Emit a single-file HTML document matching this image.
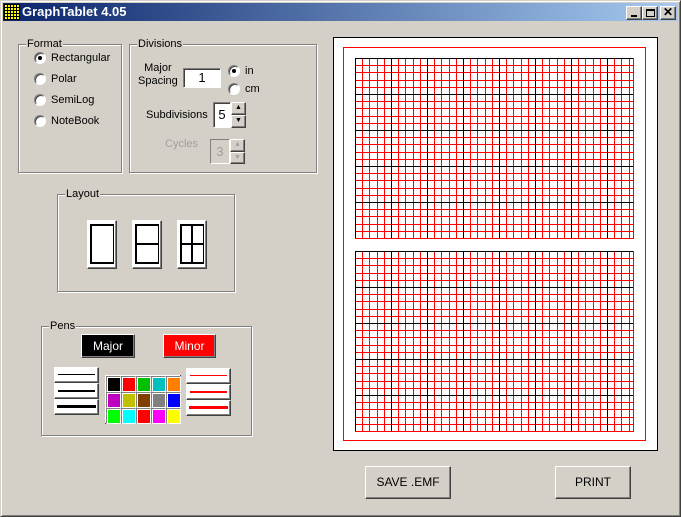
<!DOCTYPE html>
<html><head><style>
*{box-sizing:border-box}
body{margin:0;width:681px;height:517px;background:#d4d0c8;font-family:"Liberation Sans",sans-serif;font-size:11px;color:#000;position:relative;overflow:hidden}
.a{position:absolute}
.win{left:0;top:0;width:681px;height:517px;border:1px solid;border-color:#d4d0c8 #404040 #404040 #d4d0c8;box-shadow:inset 1px 1px #fff,inset -1px -1px #808080}
.title{left:3px;top:3px;width:675px;height:18px;background:linear-gradient(90deg,#0a246a,#a6caf0);color:#fff;font-weight:bold;font-size:13px;line-height:18px;padding-left:19px}
.tb{top:6px;width:16px;height:14px;background:#d4d0c8;border:1px solid;border-color:#fff #404040 #404040 #fff;box-shadow:inset -1px -1px #808080}
.grp{border:1px solid #808080;box-shadow:1px 1px #fff,inset 1px 1px #fff}
.leg{background:#d4d0c8;padding:0 1px;top:-7px;left:7px;line-height:12px}
.rad{width:12px;height:12px;border-radius:50%;background:#fff;border:1px solid;border-color:#808080 #fff #fff #808080;box-shadow:inset 1px 1px #404040}
.dot{width:4px;height:4px;border-radius:50%;background:#000;left:3px;top:3px}
.btn{border:1px solid;border-color:#fff #404040 #404040 #fff;box-shadow:inset -1px -1px #808080;background:#d4d0c8;text-align:center}
.sunk{border:1px solid;border-color:#808080 #fff #fff #808080;box-shadow:inset 1px 1px #404040;background:#fff}
.wb{background:#fff;border:1px solid;border-color:#fff #404040 #404040 #fff;box-shadow:inset -1px -1px #808080}
.sw{width:15px;height:16px;border:1px solid;border-color:#808080 #fff #fff #808080}
.sw i{display:block;position:absolute;left:1px;top:1px;width:12px;height:13px;border:0}
</style></head><body>
<div class="a win"></div>
<div class="a title">GraphTablet 4.05</div>
<svg class="a" style="left:4px;top:4px" width="16" height="16"><rect width="16" height="16" fill="#ff0"/><path d="M0.5 0V16M3.5 0V16M6.5 0V16M9.5 0V16M12.5 0V16M15.5 0V16M0 .5H16M0 3.5H16M0 6.5H16M0 9.5H16M0 12.5H16M0 15.5H16" stroke="#000"/></svg>
<div class="a tb" style="left:626px"><div class="a" style="left:4px;top:8px;width:6px;height:2px;background:#000"></div></div>
<div class="a tb" style="left:642px"><div class="a" style="left:3px;top:2px;width:9px;height:8px;border:1px solid #000;border-top-width:2px"></div></div>
<div class="a tb" style="left:660px;font-weight:bold;font-size:12px;line-height:11px;text-align:center">✕</div>

<div class="a grp" style="left:18px;top:44px;width:104px;height:129px"><span class="a leg">Format</span></div>
<div class="a rad" style="left:34px;top:52px"><div class="a dot"></div></div><div class="a" style="left:51px;top:52px">Rectangular</div>
<div class="a rad" style="left:34px;top:73px"></div><div class="a" style="left:51px;top:73px">Polar</div>
<div class="a rad" style="left:34px;top:94px"></div><div class="a" style="left:51px;top:94px">SemiLog</div>
<div class="a rad" style="left:34px;top:115px"></div><div class="a" style="left:51px;top:115px">NoteBook</div>

<div class="a grp" style="left:129px;top:44px;width:188px;height:129px"><span class="a leg">Divisions</span></div>
<div class="a" style="left:138px;top:62px;text-align:center;line-height:13px">Major<br>Spacing</div>
<div class="a sunk" style="left:183px;top:68px;width:38px;height:20px;text-align:center;font-size:13px;line-height:18px">1</div>
<div class="a rad" style="left:228px;top:65px"><div class="a dot"></div></div><div class="a" style="left:245px;top:65px">in</div>
<div class="a rad" style="left:228px;top:83px"></div><div class="a" style="left:245px;top:83px">cm</div>
<div class="a" style="left:146px;top:109px">Subdivisions</div>
<div class="a sunk" style="left:213px;top:102px;width:18px;height:26px;font-size:13px;line-height:24px;text-align:center">5</div>
<div class="a btn" style="left:231px;top:102px;width:15px;height:13px;font-size:7px;line-height:10px">▲</div>
<div class="a btn" style="left:231px;top:115px;width:15px;height:13px;font-size:7px;line-height:10px">▼</div>
<div class="a" style="left:165px;top:138px;color:#a0a0a0">Cycles</div>
<div class="a" style="left:210px;top:139px;width:20px;height:25px;border:1px solid;border-color:#808080 #fff #fff #808080;background:#d4d0c8;color:#a0a0a0;font-size:13px;line-height:23px;text-align:center">3</div>
<div class="a btn" style="left:230px;top:139px;width:15px;height:13px;font-size:7px;line-height:10px;color:#a0a0a0">▲</div>
<div class="a btn" style="left:230px;top:152px;width:15px;height:12px;font-size:7px;line-height:10px;color:#a0a0a0">▼</div>

<div class="a grp" style="left:57px;top:194px;width:178px;height:98px"><span class="a leg">Layout</span></div>
<div class="a wb" style="left:87px;top:220px;width:30px;height:49px"><div class="a" style="left:2px;top:3px;width:24px;height:40px;border:1px solid #000;border-width:2px 1px 2px 2px"></div></div>
<div class="a wb" style="left:132px;top:220px;width:30px;height:49px"><div class="a" style="left:2px;top:3px;width:24px;height:40px;border:1px solid #000;border-width:2px 1px 2px 2px"></div><div class="a" style="left:2px;top:22px;width:24px;height:2px;background:#000"></div></div>
<div class="a wb" style="left:177px;top:220px;width:30px;height:49px"><div class="a" style="left:2px;top:3px;width:24px;height:40px;border:1px solid #000;border-width:2px 1px 2px 2px"></div><div class="a" style="left:2px;top:22px;width:24px;height:2px;background:#000"></div><div class="a" style="left:13px;top:3px;width:2px;height:40px;background:#000"></div></div>

<div class="a grp" style="left:41px;top:326px;width:211px;height:110px"><span class="a leg">Pens</span></div>
<div class="a btn" style="left:81px;top:334px;width:54px;height:24px;background:#000;color:#fff;font-size:12px;line-height:22px">Major</div>
<div class="a btn" style="left:163px;top:334px;width:53px;height:24px;background:#f00;color:#fff;font-size:12px;line-height:22px">Minor</div>
<div class="a wb" style="left:54px;top:367px;width:45px;height:16px"><div class="a" style="left:3px;top:6px;width:37px;height:1px;background:#000"></div></div>
<div class="a wb" style="left:54px;top:383px;width:45px;height:16px"><div class="a" style="left:3px;top:6px;width:37px;height:2px;background:#000"></div></div>
<div class="a wb" style="left:54px;top:399px;width:45px;height:16px"><div class="a" style="left:2px;top:5px;width:39px;height:3px;background:#000"></div></div>
<div class="a wb" style="left:186px;top:368px;width:45px;height:16px"><div class="a" style="left:3px;top:6px;width:37px;height:1px;background:#f00"></div></div>
<div class="a wb" style="left:186px;top:384px;width:45px;height:16px"><div class="a" style="left:3px;top:6px;width:37px;height:2px;background:#f00"></div></div>
<div class="a wb" style="left:186px;top:400px;width:45px;height:16px"><div class="a" style="left:2px;top:5px;width:39px;height:3px;background:#f00"></div></div>
<div class="a" style="left:105px;top:375px;width:76px;height:49px;background:#fff;border-right:1px solid #404040;border-bottom:1px solid #404040"></div>
<div class="a sw" style="left:106px;top:376px"><i style="background:#000"></i></div>
<div class="a sw" style="left:121px;top:376px"><i style="background:#f00"></i></div>
<div class="a sw" style="left:136px;top:376px"><i style="background:#00c000"></i></div>
<div class="a sw" style="left:151px;top:376px"><i style="background:#00c0c0"></i></div>
<div class="a sw" style="left:166px;top:376px"><i style="background:#ff8000"></i></div>
<div class="a sw" style="left:106px;top:392px"><i style="background:#c000c0"></i></div>
<div class="a sw" style="left:121px;top:392px"><i style="background:#c0c000"></i></div>
<div class="a sw" style="left:136px;top:392px"><i style="background:#804000"></i></div>
<div class="a sw" style="left:151px;top:392px"><i style="background:#808080"></i></div>
<div class="a sw" style="left:166px;top:392px"><i style="background:#0000ff"></i></div>
<div class="a sw" style="left:106px;top:408px"><i style="background:#00ff00"></i></div>
<div class="a sw" style="left:121px;top:408px"><i style="background:#00ffff"></i></div>
<div class="a sw" style="left:136px;top:408px"><i style="background:#f00"></i></div>
<div class="a sw" style="left:151px;top:408px"><i style="background:#ff00ff"></i></div>
<div class="a sw" style="left:166px;top:408px"><i style="background:#ffff00"></i></div>

<svg class="a" style="left:0;top:0" width="681" height="517" shape-rendering="crispEdges">
<defs>
<g id="grid">
<path stroke="#f00" fill="none" d="M362.5 58V239M369.5 58V239M377.5 58V239M384.5 58V239M398.5 58V239M405.5 58V239M413.5 58V239M420.5 58V239M434.5 58V239M441.5 58V239M449.5 58V239M456.5 58V239M470.5 58V239M477.5 58V239M485.5 58V239M492.5 58V239M506.5 58V239M513.5 58V239M521.5 58V239M528.5 58V239M542.5 58V239M549.5 58V239M557.5 58V239M564.5 58V239M578.5 58V239M585.5 58V239M593.5 58V239M600.5 58V239M614.5 58V239M621.5 58V239M629.5 58V239M633.5 58V239
M355 65.5H634M355 72.5H634M355 80.5H634M355 87.5H634M355 101.5H634M355 108.5H634M355 116.5H634M355 123.5H634M355 137.5H634M355 144.5H634M355 152.5H634M355 159.5H634M355 173.5H634M355 180.5H634M355 188.5H634M355 195.5H634M355 209.5H634M355 216.5H634M355 224.5H634M355 231.5H634M355 238.5H634"/>
<path stroke="#000" fill="none" d="M355.5 58V238M391.5 58V238M427.5 58V238M463.5 58V238M499.5 58V238M535.5 58V238M571.5 58V238M607.5 58V238M355 58.5H633M355 94.5H633M355 130.5H633M355 166.5H633M355 202.5H633"/>
</g>
</defs>
<rect x="333.5" y="37.5" width="324" height="413" fill="#fff" stroke="#000"/>
<rect x="343.5" y="47.5" width="302" height="393" fill="none" stroke="#f00"/>
<use href="#grid"/>
<use href="#grid" transform="translate(0,193)"/>
</svg>

<div class="a btn" style="left:365px;top:466px;width:86px;height:33px;font-size:12px;line-height:31px">SAVE .EMF</div>
<div class="a btn" style="left:555px;top:466px;width:76px;height:33px;font-size:12px;line-height:31px">PRINT</div>
</body></html>
